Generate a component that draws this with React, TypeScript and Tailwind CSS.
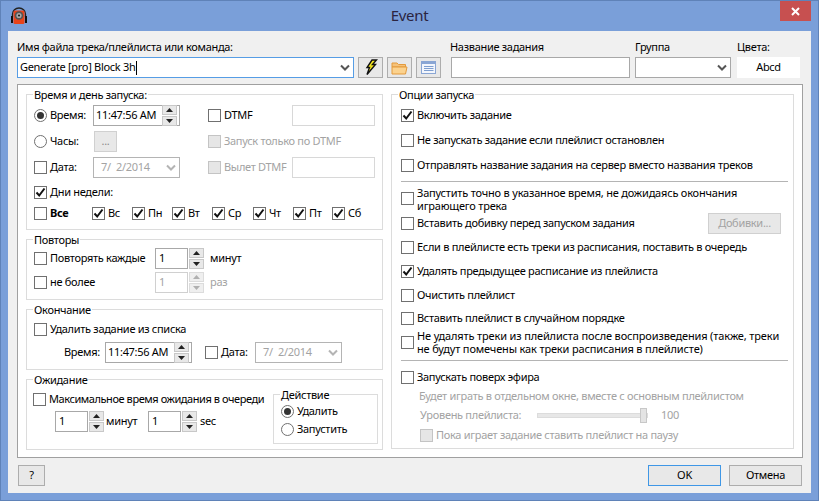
import type { ReactNode } from "react";

function Chevron({ muted }: { muted?: boolean }) {
  return (
    <svg width="10" height="7" viewBox="0 0 10 7" className="shrink-0">
      <path d="M1 1.5 L5 5.5 L9 1.5" fill="none" stroke={muted ? "#b4b4b4" : "#555555"} strokeWidth="2" />
    </svg>
  );
}

function Check({ on, disabled, label, bold, muted, className = "" }: { on?: boolean; disabled?: boolean; label?: ReactNode; bold?: boolean; muted?: boolean; className?: string }) {
  return (
    <div className={`flex items-center ${className}`}>
      <span className={`flex h-[13px] w-[13px] shrink-0 items-center justify-center border ${disabled ? "border-[#c4c4c4] bg-[#e6e6e6]" : "border-[#707070] bg-white"}`}>
        {on ? (
          <svg width="11" height="11" viewBox="0 0 11 11">
            <path d="M1.5 5.5 L4.2 8.5 L9.5 1.5" fill="none" stroke="#111111" strokeWidth="2" />
          </svg>
        ) : null}
      </span>
      {label ? <span className={`ml-[3px] whitespace-nowrap ${bold ? "font-bold" : ""} ${disabled || muted ? "text-[#a3a3a3]" : ""}`}>{label}</span> : null}
    </div>
  );
}

function Radio({ on, label, className = "" }: { on?: boolean; label: string; className?: string }) {
  return (
    <div className={`flex items-center ${className}`}>
      <span className="flex h-[13px] w-[13px] shrink-0 items-center justify-center rounded-full border border-[#707070] bg-white">
        {on ? <span className="h-[7px] w-[7px] rounded-full bg-[#333333]" /> : null}
      </span>
      <span className="ml-[3px] whitespace-nowrap">{label}</span>
    </div>
  );
}

function SpinButtons({ disabled }: { disabled?: boolean }) {
  const colour = disabled ? "#b0b0b0" : "#222222";
  const box = `flex h-[10px] w-[15px] items-center justify-center border ${disabled ? "border-[#dcdcdc] bg-[#efefef]" : "border-[#c8c8c8] bg-[#e8e8e8]"}`;
  return (
    <div className="flex shrink-0 flex-col gap-px">
      <span className={box}>
        <svg width="7" height="4" viewBox="0 0 7 4"><path d="M3.5 0 L7 4 L0 4 Z" fill={colour} /></svg>
      </span>
      <span className={box}>
        <svg width="7" height="4" viewBox="0 0 7 4"><path d="M0 0 L7 0 L3.5 4 Z" fill={colour} /></svg>
      </span>
    </div>
  );
}

function Spin({ disabled, className = "" }: { disabled?: boolean; className?: string }) {
  return (
    <div className={`flex items-center gap-px ${className}`}>
      <div className={`flex h-[21px] w-[33px] items-center border bg-white pl-[3px] ${disabled ? "border-[#d0d0d0] text-[#a3a3a3]" : "border-[#a8a8a8]"}`}>1</div>
      <SpinButtons disabled={disabled} />
    </div>
  );
}

function TimeField({ className = "" }: { className?: string }) {
  return (
    <div className={`flex h-[21px] w-[87px] items-center justify-between border border-[#a8a8a8] bg-white pl-[2px] pr-[2px] ${className}`}>
      <span className="whitespace-nowrap">11:47:56 AM</span>
      <SpinButtons />
    </div>
  );
}

function DateField({ className = "" }: { className?: string }) {
  return (
    <div className={`flex h-[21px] w-[87px] items-center justify-between border border-[#b4b4b4] bg-white pl-[7px] pr-[3px] text-[#a3a3a3] ${className}`}>
      <span className="whitespace-pre">7/  2/2014</span>
      <Chevron muted />
    </div>
  );
}

function Group({ title, children, className = "" }: { title: string; children: ReactNode; className?: string }) {
  return (
    <div className={`relative border border-[#dcdcdc] bg-white ${className}`}>
      <span className="absolute -top-[7px] left-[6px] bg-white px-px leading-[14px]">{title}</span>
      {children}
    </div>
  );
}

function ActionButton({ children, primary, className = "" }: { children: ReactNode; primary?: boolean; className?: string }) {
  return (
    <div className={`flex h-[21px] items-center justify-center border bg-[#e8e8e8] ${primary ? "border-[#3f97e6]" : "border-[#adadad]"} ${className}`}>
      {children}
    </div>
  );
}

function IconButton({ children }: { children: ReactNode }) {
  return <div className="flex h-[21px] w-[25px] items-center justify-center border border-[#adadad] bg-[#e8e8e8]">{children}</div>;
}

function Separator() {
  return <div className="h-px w-[387px] bg-[#b4b4b4]" />;
}

export default function App() {
  const days = [
    { label: "Вс", width: "w-[40px]" },
    { label: "Пн", width: "w-[40px]" },
    { label: "Вт", width: "w-[40px]" },
    { label: "Ср", width: "w-[41px]" },
    { label: "Чт", width: "w-[40px]" },
    { label: "Пт", width: "w-[39px]" },
    { label: "Сб", width: "w-[40px]" },
  ];

  return (
    <div className="flex h-[501px] w-[819px] flex-col overflow-hidden border border-[#5f82b8] bg-[#7a9fd9] font-['Noto_Sans',sans-serif] text-[11px] tracking-[-0.3px] text-black">
      <div className="grid h-[30px] shrink-0 grid-cols-[1fr_auto_1fr]">
        <div className="pl-[9px] pt-[6px]">
          <svg width="18" height="18" viewBox="0 0 18 18">
            <path d="M2.5 10 V7 A6.5 6 0 0 1 15.5 7 V10" fill="none" stroke="#222222" strokeWidth="1.3" />
            <rect x="3.5" y="3.5" width="11" height="13.5" rx="1.5" fill="#e8431a" />
            <rect x="1" y="9" width="2" height="7" fill="#111111" />
            <rect x="15" y="9" width="2" height="7" fill="#111111" />
            <circle cx="9" cy="8.5" r="4.3" fill="#555555" />
            <circle cx="9" cy="8.5" r="2.6" fill="#a9a9a9" />
            <circle cx="9" cy="8.5" r="1.1" fill="#222222" />
          </svg>
        </div>
        <div className="pt-[4px] text-[15px] leading-[20px] tracking-[-0.3px] text-[#2b2440]">Event</div>
        <div className="flex justify-end pr-[7px]">
          <div className="flex h-[20px] w-[31px] items-center justify-center bg-[#c75050]">
            <svg width="9" height="9" viewBox="0 0 9 9"><path d="M1 1 L8 8 M8 1 L1 8" stroke="#ffffff" strokeWidth="2" /></svg>
          </div>
        </div>
      </div>

      <div className="ml-[7px] flex h-[462px] w-[803px] flex-col bg-[#f0f0f0] pl-[9px]">
        <div className="flex h-[53px] shrink-0">
          <div className="w-[341px] pt-[9px]">
            <div className="h-[17px] leading-[14px]">Имя файла трека/плейлиста или команда:</div>
            <div className="flex h-[21px] w-[337px] items-center justify-between border border-[#569de5] bg-white pl-[2px] pr-[3px]">
              <span className="flex items-center">Generate [pro] Block 3h<span className="ml-px h-[14px] w-px bg-black" /></span>
              <Chevron />
            </div>
          </div>
          <div className="flex gap-[4px] pt-[26px]">
            <IconButton>
              <svg width="14" height="17" viewBox="0 0 14 17">
                <path d="M8 1 L12.5 1 L8.5 5.5 L11.5 5.5 L3 15.5 L5.5 8.5 L3 8.5 Z" fill="#f6e81e" stroke="#111111" strokeWidth="1.4" />
              </svg>
            </IconButton>
            <IconButton>
              <svg width="17" height="14" viewBox="0 0 17 14">
                <path d="M1 2 H6 L7.5 3.5 H14.5 V6 H1 Z" fill="#f5c27a" stroke="#e39a3c" />
                <path d="M1 13 V6 H16 L14.5 13 Z" fill="#fbd28e" stroke="#e39a3c" />
              </svg>
            </IconButton>
            <IconButton>
              <svg width="15" height="13" viewBox="0 0 15 13">
                <rect x="0.5" y="0.5" width="14" height="12" fill="#f3f6fc" stroke="#8aa6d4" />
                <rect x="1" y="1" width="13" height="2" fill="#8aa6d4" />
                <path d="M3 5.5 H12.5 M3 7.5 H12.5 M3 9.5 H12.5" stroke="#7f9fd0" />
              </svg>
            </IconButton>
          </div>
          <div className="ml-[10px] w-[184px] pt-[9px]">
            <div className="-ml-px h-[17px] leading-[14px]">Название задания</div>
            <div className="h-[21px] w-[179px] border border-[#a8a8a8] bg-white" />
          </div>
          <div className="w-[102px] pt-[9px]">
            <div className="h-[17px] leading-[14px]">Группа</div>
            <div className="flex h-[21px] w-[96px] items-center justify-end border border-[#a8a8a8] bg-white pr-[3px]">
              <Chevron />
            </div>
          </div>
          <div className="pt-[9px]">
            <div className="h-[17px] leading-[14px]">Цвета:</div>
            <div className="flex h-[21px] w-[63px] items-center justify-center bg-white">Abcd</div>
          </div>
        </div>

        <div className="flex h-[374px] w-[786px] shrink-0 gap-[8px] border border-[#a0a0a0] bg-white pl-[8px] pt-[9px]">
          <div className="flex w-[357px] flex-col gap-[9px]">
            <Group title="Время и день запуска:" className="h-[136px] pl-[7px] pt-[7px]">
              <div className="flex h-[26px] items-center">
                <Radio on label="Время:" className="w-[59px]" />
                <TimeField />
                <Check label="DTMF" className="ml-[28px] w-[84px]" />
                <div className="h-[21px] w-[83px] border border-[#d8d8d8] bg-white" />
              </div>
              <div className="flex h-[26px] items-center">
                <Radio label="Часы:" className="w-[60px]" />
                <ActionButton className="h-[20px] w-[23px] border-[#d0d0d0] text-[#8a8a8a]">...</ActionButton>
                <Check disabled label="Запуск только по DTMF" className="ml-[91px]" />
              </div>
              <div className="flex h-[26px] items-center">
                <Check label="Дата:" className="w-[59px]" />
                <DateField />
                <Check disabled label="Вылет DTMF" className="ml-[28px] w-[84px]" />
                <div className="h-[21px] w-[83px] border border-[#d8d8d8] bg-white" />
              </div>
              <div className="flex h-[25px] items-center">
                <Check on label="Дни недели:" />
              </div>
              <div className="flex h-[17px] items-center">
                <Check bold label="Все" className="w-[58px]" />
                {days.map((day) => (
                  <Check key={day.label} on label={day.label} className={day.width} />
                ))}
              </div>
            </Group>

            <Group title="Повторы" className="h-[61px] pl-[7px] pt-[6px]">
              <div className="flex h-[24px] items-center">
                <Check label="Повторять каждые" className="w-[121px]" />
                <Spin />
                <span className="ml-[6px]">минут</span>
              </div>
              <div className="flex h-[24px] items-center">
                <Check label="не более" className="w-[121px]" />
                <Spin disabled />
                <span className="ml-[6px] text-[#a3a3a3]">раз</span>
              </div>
            </Group>

            <Group title="Окончание" className="h-[61px] pl-[7px] pt-[9px]">
              <div className="flex h-[20px] items-center">
                <Check label="Удалить задание из списка" />
              </div>
              <div className="mt-px flex h-[24px] items-center pl-[30px]">
                <span className="w-[41px]">Время:</span>
                <TimeField />
                <Check label="Дата:" className="ml-[13px] w-[50px]" />
                <DateField />
              </div>
            </Group>

            <Group title="Ожидание" className="flex h-[71px]">
              <div className="w-[246px] pl-[6px] pt-[9px]">
                <div className="flex h-[20px] items-center tracking-[-0.43px]">
                  <Check label="Максимальное время ожидания в очереди" />
                </div>
                <div className="mt-px flex h-[22px] items-center pl-[22px]">
                  <Spin />
                  <span className="ml-[2px] w-[42px]">минут</span>
                  <Spin />
                  <span className="ml-[3px]">sec</span>
                </div>
              </div>
              <Group title="Действие" className="mt-[14px] h-[50px] w-[105px] pl-[7px] pt-[7px]">
                <Radio on label="Удалить" className="h-[18px]" />
                <Radio label="Запустить" className="h-[18px]" />
              </Group>
            </Group>
          </div>

          <Group title="Опции запуска" className="h-[355px] w-[403px] pl-[9px] pt-[8px]">
            <Check on label="Включить задание" className="h-[25px]" />
            <Check label="Не запускать задание если плейлист остановлен" className="h-[25px]" />
            <Check label="Отправлять название задания на сервер вместо названия треков" className="h-[25px] tracking-[-0.27px]" />
            <div className="mt-[3px]"><Separator /></div>
            <Check
              label={<span className="block leading-[13px]">Запустить точно в указанное время, не дожидаясь окончания<br />играющего трека</span>}
              className="mt-[3px] h-[27px] tracking-[-0.2px]"
            />
            <div className="flex h-[23px] items-center">
              <Check label="Вставить добивку перед запуском задания" className="w-[307px]" />
              <ActionButton className="w-[73px] border-[#d0d0d0] text-[#a3a3a3]">Добивки...</ActionButton>
            </div>
            <Check label="Если в плейлисте есть треки из расписания, поставить в очередь" className="h-[24px]" />
            <Check on label="Удалять предыдущее расписание из плейлиста" className="h-[24px]" />
            <Check label="Очистить плейлист" className="h-[24px]" />
            <Check label="Вставить плейлист в случайном порядке" className="h-[22px]" />
            <Check
              label={<span className="block leading-[13px]">Не удалять треки из плейлиста после воспроизведения (также, треки<br />не будут помечены как треки расписания в плейлисте)</span>}
              className="h-[26px] tracking-[-0.15px]"
            />
            <div className="mt-[5px]"><Separator /></div>
            <Check label="Запускать поверх эфира" className="mt-[5px] h-[22px]" />
            <div className="flex h-[17px] items-center pl-[18px] text-[#a3a3a3]">Будет играть в отдельном окне, вместе с основным плейлистом</div>
            <div className="flex h-[20px] items-center pl-[19px] text-[#a3a3a3]">
              <span className="w-[117px]">Уровень плейлиста:</span>
              <div className="relative h-[5px] w-[111px] border border-[#dcdcdc] bg-[#e7e7e7]">
                <span className="absolute -top-[6px] right-0 h-[15px] w-[7px] border border-[#c8c8c8] bg-[#e4e4e4]" />
              </div>
              <span className="ml-[13px]">100</span>
            </div>
            <Check disabled label="Пока играет задание ставить плейлист на паузу" className="ml-[19px] h-[20px]" />
          </Group>
        </div>

        <div className="flex flex-1 items-start justify-between pr-[9px] pt-[7px]">
          <ActionButton className="ml-px w-[27px]">?</ActionButton>
          <div className="flex gap-[8px]">
            <ActionButton primary className="w-[73px]">OK</ActionButton>
            <ActionButton className="w-[73px]">Отмена</ActionButton>
          </div>
        </div>
      </div>
    </div>
  );
}
